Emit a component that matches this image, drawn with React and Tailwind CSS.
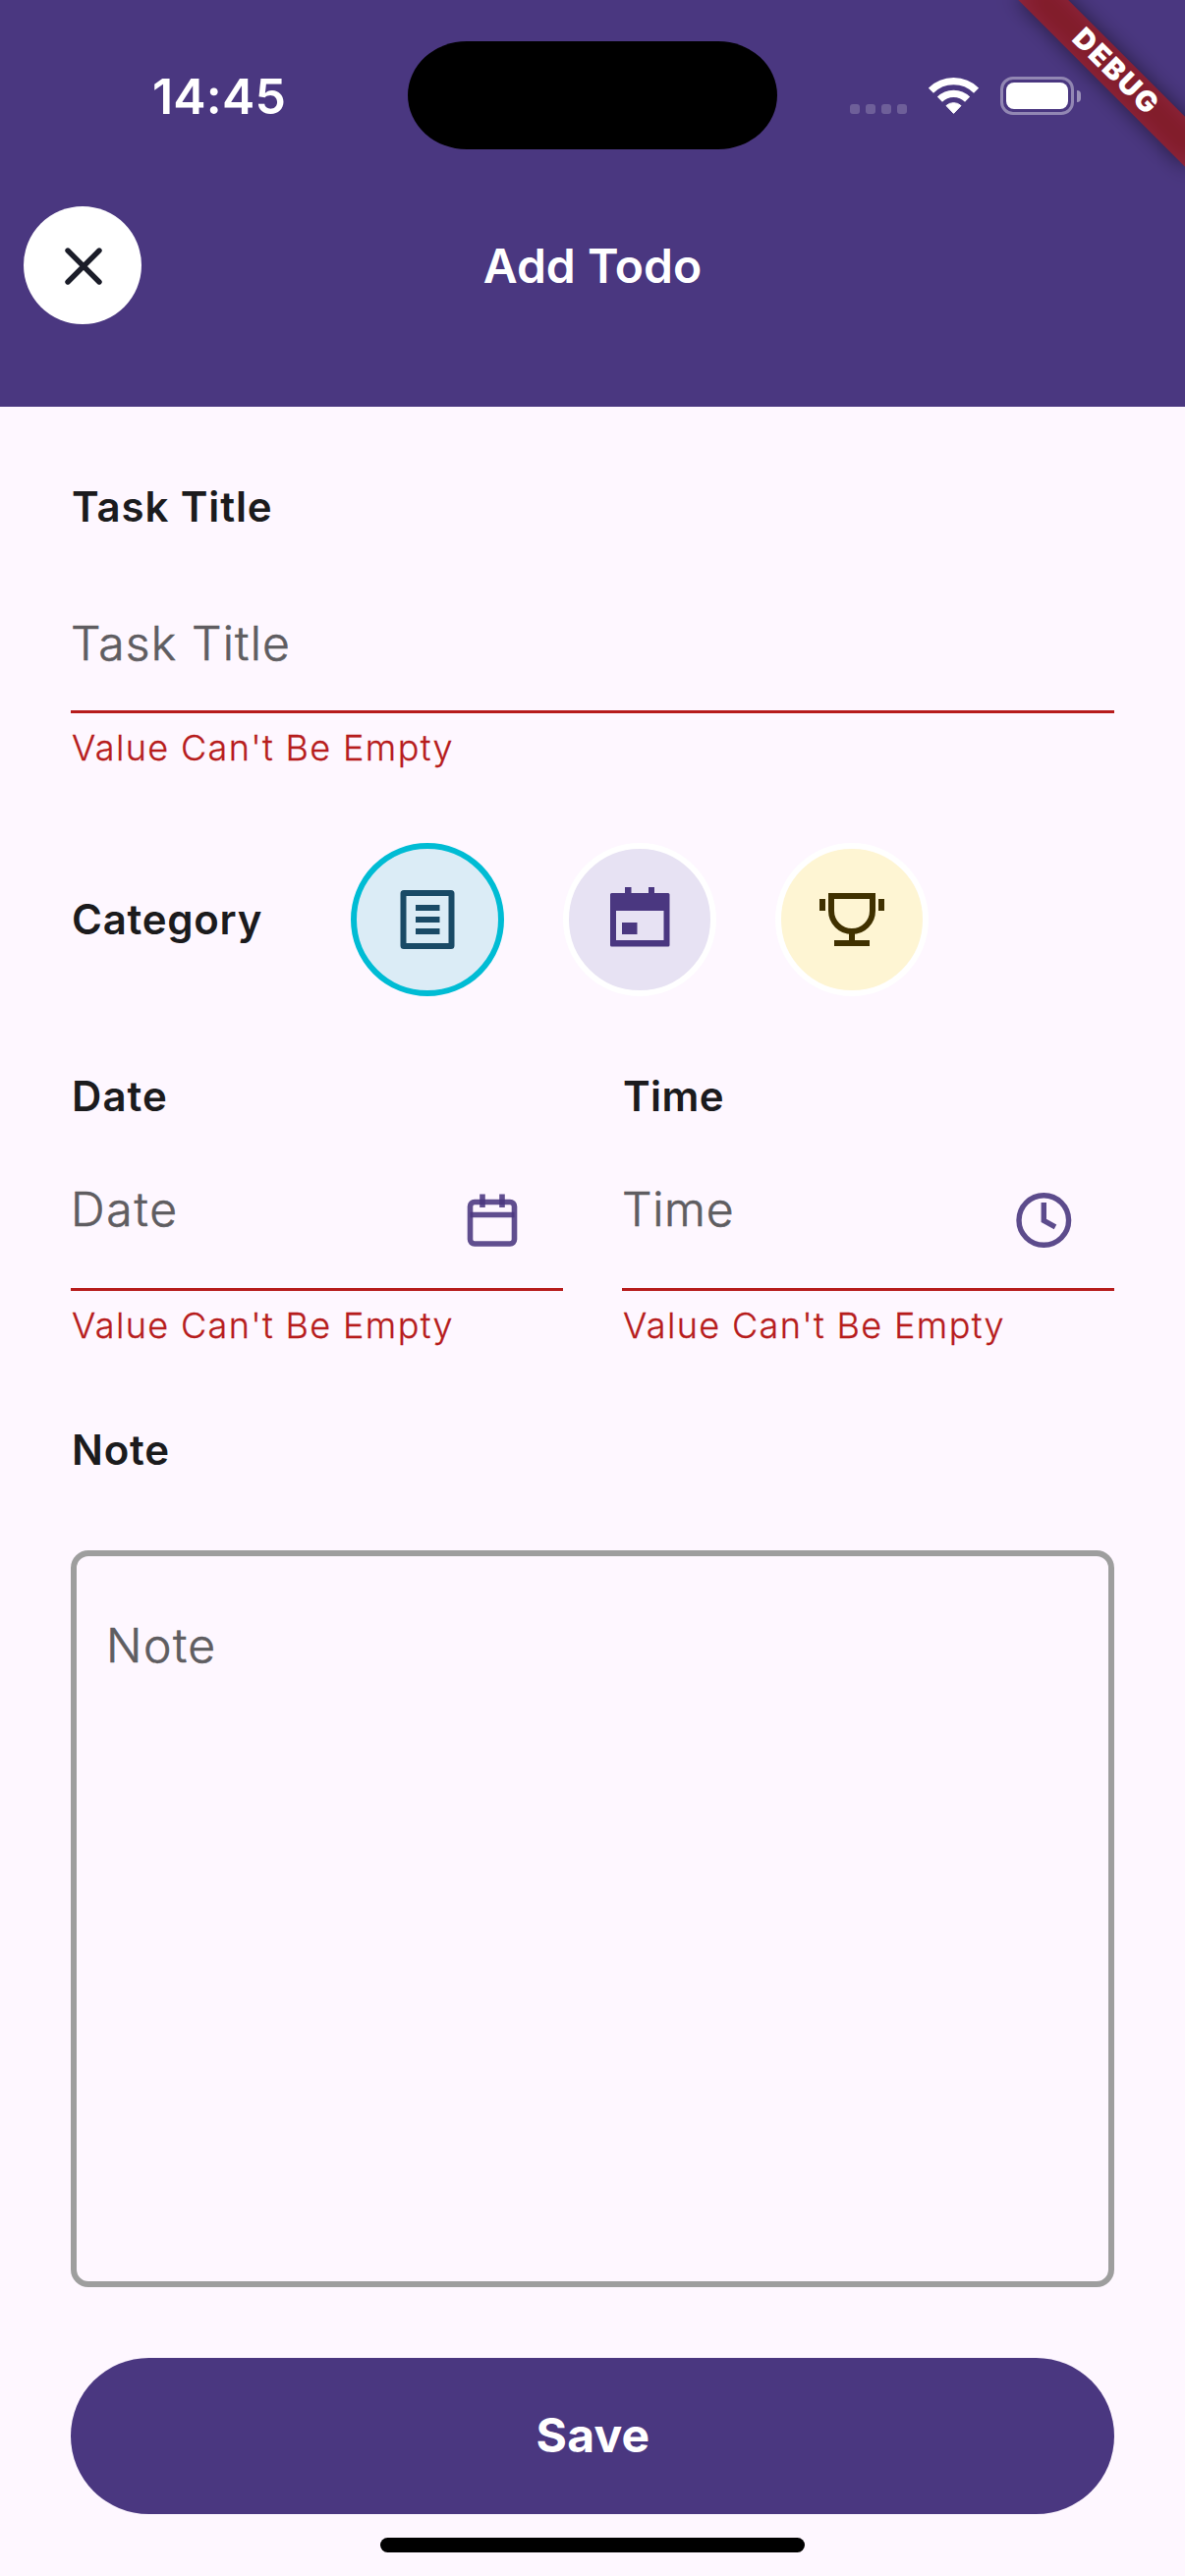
import React from 'react';
import clsx from 'clsx';

function WifiIcon() {
  return (
    <svg className="h-[37px] w-[51px]" viewBox="0 0 51 37" fill="none">
      <path d="M2.45 13.15A32.6 32.6 0 0 1 48.55 13.15" stroke="white" strokeWidth="7.2" />
      <path d="M11.43 22.13A19.9 19.9 0 0 1 39.57 22.13" stroke="white" strokeWidth="7.2" />
      <path d="M25.5 36.4L18 28.6A11 11 0 0 1 33 28.6Z" fill="white" stroke="white" strokeWidth="1" strokeLinejoin="round" />
    </svg>
  );
}

function BatteryIcon() {
  return (
    <div className="flex items-center gap-[3px]">
      <div className="h-[39px] w-[75px] rounded-[13px] border-[3px] border-white/40 p-[3px]">
        <div className="h-full w-full rounded-[8px] bg-white" />
      </div>
      <div className="h-[12px] w-[4px] rounded-r-full bg-white/45" />
    </div>
  );
}

function StatusBar() {
  return (
    <div className="grid h-[195px] grid-cols-[415px_376px_1fr] items-center">
      <span className="pl-[155px] text-[50px] leading-[60px] font-semibold tracking-[0.2px]">14:45</span>
      <div className="mb-px h-[110px] rounded-[60px/55px] bg-black" />
      <div className="flex items-center gap-[22px] pl-[74px]">
        <div className="mt-[27px] flex gap-[6px]">
          {[0, 1, 2, 3].map((dot) => (
            <div key={dot} className="size-[10px] rounded-[3px] bg-white/20" />
          ))}
        </div>
        <WifiIcon />
        <BatteryIcon />
      </div>
    </div>
  );
}

function DebugBanner() {
  return (
    <div className="pointer-events-none absolute inset-0 overflow-hidden">
      <div className="absolute top-[84px] right-[-120px] h-[36px] w-[240px] origin-[120px_-84px] rotate-45">
        <div className="absolute inset-0 bg-black/50 blur-[10.9px]" />
        <div className="relative flex h-full items-center justify-center bg-[#b71c1c]/63 pb-[4px] pl-[4px] text-[29px] leading-none font-black tracking-[2px]">
          DEBUG
        </div>
      </div>
    </div>
  );
}

function Header() {
  return (
    <header className="relative h-[414px] bg-[#4a3780] text-white">
      <StatusBar />
      <div className="grid h-[150px] grid-cols-[120px_1fr_120px] items-center px-6">
        <button className="flex size-[120px] items-center justify-center rounded-full bg-white">
          <svg className="size-[48px]" viewBox="0 0 48 48" fill="none" stroke="#1b1d29" strokeWidth="5.4" strokeLinecap="round">
            <path d="M9 9L41 41M41 9L9 41" />
          </svg>
        </button>
        <h1 className="pt-[2px] text-center text-[48px] leading-[60px] font-semibold">Add Todo</h1>
      </div>
      <DebugBanner />
    </header>
  );
}

function Label({ children, tracking = 'tracking-[0.8px]' }) {
  return (
    <div className={clsx('pl-px text-[42px] leading-[60px] font-semibold text-[#1b1b1d]', tracking)}>{children}</div>
  );
}

function ErrorText() {
  return (
    <div className="mt-2 h-[54px] pl-px text-[36px] leading-[54px] font-light tracking-[1.36px] text-[#b71c1c] [-webkit-text-stroke:0.3px]">
      Value Can't Be Empty
    </div>
  );
}

const placeholder = 'text-[48px] leading-[72px] font-light text-[#5f5d61] [-webkit-text-stroke:0.6px]';

function CalendarIcon() {
  return (
    <svg className="size-[72px]" viewBox="0 0 72 72" fill="none" stroke="#4a3780" strokeWidth="5.6" strokeOpacity="0.88">
      <rect x="13.5" y="17.5" width="45" height="42.5" rx="4.5" />
      <path d="M13.5 30.5H58.5M26 9.5V23M46 9.5V23" />
    </svg>
  );
}

function ClockIcon() {
  return (
    <svg className="size-[72px]" viewBox="0 0 72 72" fill="none" stroke="#4a3780" strokeWidth="5.4" strokeOpacity="0.9">
      <circle cx="36.3" cy="36" r="25.3" />
      <path d="M36.3 18V36.5L48 42.8" />
    </svg>
  );
}

function PickerField({ label, labelTracking, tracking, icon }) {
  return (
    <div>
      <Label tracking={labelTracking}>{label}</Label>
      <div className="mt-6 flex h-[144px] border-b-[3px] border-[#b71c1c]">
        <div className={clsx('flex-1 pt-[25px]', placeholder, tracking)}>{label}</div>
        <div className="flex h-[144px] w-[144px] items-center justify-center">{icon}</div>
      </div>
      <ErrorText />
    </div>
  );
}

function DocumentGlyph() {
  return (
    <svg className="size-[84px]" viewBox="0 0 84 84" fill="none" stroke="#194a66" strokeWidth="6">
      <rect x="17.5" y="15" width="49" height="54" rx="0.5" />
      <path d="M30 30H54.5M30 42H54.5M30 54H54.5" />
    </svg>
  );
}

function EventGlyph() {
  return (
    <svg className="size-[84px]" viewBox="0 0 84 84" fill="#4a3780">
      <path fillRule="evenodd" d="M12 16.5a1.5 1.5 0 0 1 1.5-1.5H27V9H33.5V15H51V9H57V15H71a1.5 1.5 0 0 1 1.5 1.5V68a1.5 1.5 0 0 1-1.5 1.5H13.5A1.5 1.5 0 0 1 12 68ZM18 33V63H66.5V33Z" />
      <path d="M24 45H39.5V57H24Z" />
    </svg>
  );
}

function TrophyGlyph() {
  return (
    <svg className="size-[84px]" viewBox="0 0 84 84" fill="none" stroke="#403100" strokeWidth="6">
      <path d="M21 18H63V33A21 21 0 0 1 21 33Z" />
      <path d="M42 54V66M24 66H60M12 21V33M72 21V33" />
    </svg>
  );
}

const categories = [
  { id: 'task', ring: 'border-[#00bcd4] bg-[#dbecf6]', glyph: <DocumentGlyph /> },
  { id: 'event', ring: 'border-white bg-[#e7e2f3]', glyph: <EventGlyph /> },
  { id: 'goal', ring: 'border-white bg-[#fef5d3]', glyph: <TrophyGlyph /> },
];

export default function App() {
  return (
    <div className="h-[2622px] w-[1206px] overflow-hidden bg-[#fef7ff] font-[Inter,'Liberation_Sans',sans-serif]">
      <Header />
      <main className="flex flex-col px-[72px] pt-[72px]">
        <Label tracking="tracking-[0.88px]">Task Title</Label>
        <div className={clsx('mt-9 h-[144px] border-b-[3px] border-[#b71c1c] pt-[37px] tracking-[1.2px]', placeholder)}>
          Task Title
        </div>
        <ErrorText />

        <div className="mt-[70px] grid grid-cols-[285px_1fr] items-center">
          <Label tracking="tracking-[0.74px]">Category</Label>
          <div className="flex gap-[60px]">
            {categories.map(({ id, ring, glyph }) => (
              <button key={id} className={clsx('flex size-[156px] items-center justify-center rounded-full border-[6px]', ring)}>
                {glyph}
              </button>
            ))}
          </div>
        </div>

        <div className="mt-[72px] grid grid-cols-2 gap-[60px]">
          <PickerField label="Date" labelTracking="tracking-[1.08px]" tracking="tracking-[1.8px]" icon={<CalendarIcon />} />
          <PickerField label="Time" labelTracking="tracking-[0.38px]" tracking="tracking-[0.7px]" icon={<ClockIcon />} />
        </div>

        <div className="mt-[70px]">
          <Label>Note</Label>
        </div>
        <div className={clsx('mt-[72px] h-[750px] rounded-[18px] border-[6px] border-[#9e9e9e] px-[30px] pt-[55px] tracking-[1.5px]', placeholder)}>
          Note
        </div>

        <button className="mt-[72px] flex h-[159px] items-center justify-center rounded-full bg-[#4a3780] pb-[2px] pl-px text-[48px] leading-[60px] font-bold tracking-[0.2px] text-white">
          Save
        </button>
        <div className="mt-6 h-[15px] w-[432px] self-center rounded-full bg-black" />
      </main>
    </div>
  );
}
